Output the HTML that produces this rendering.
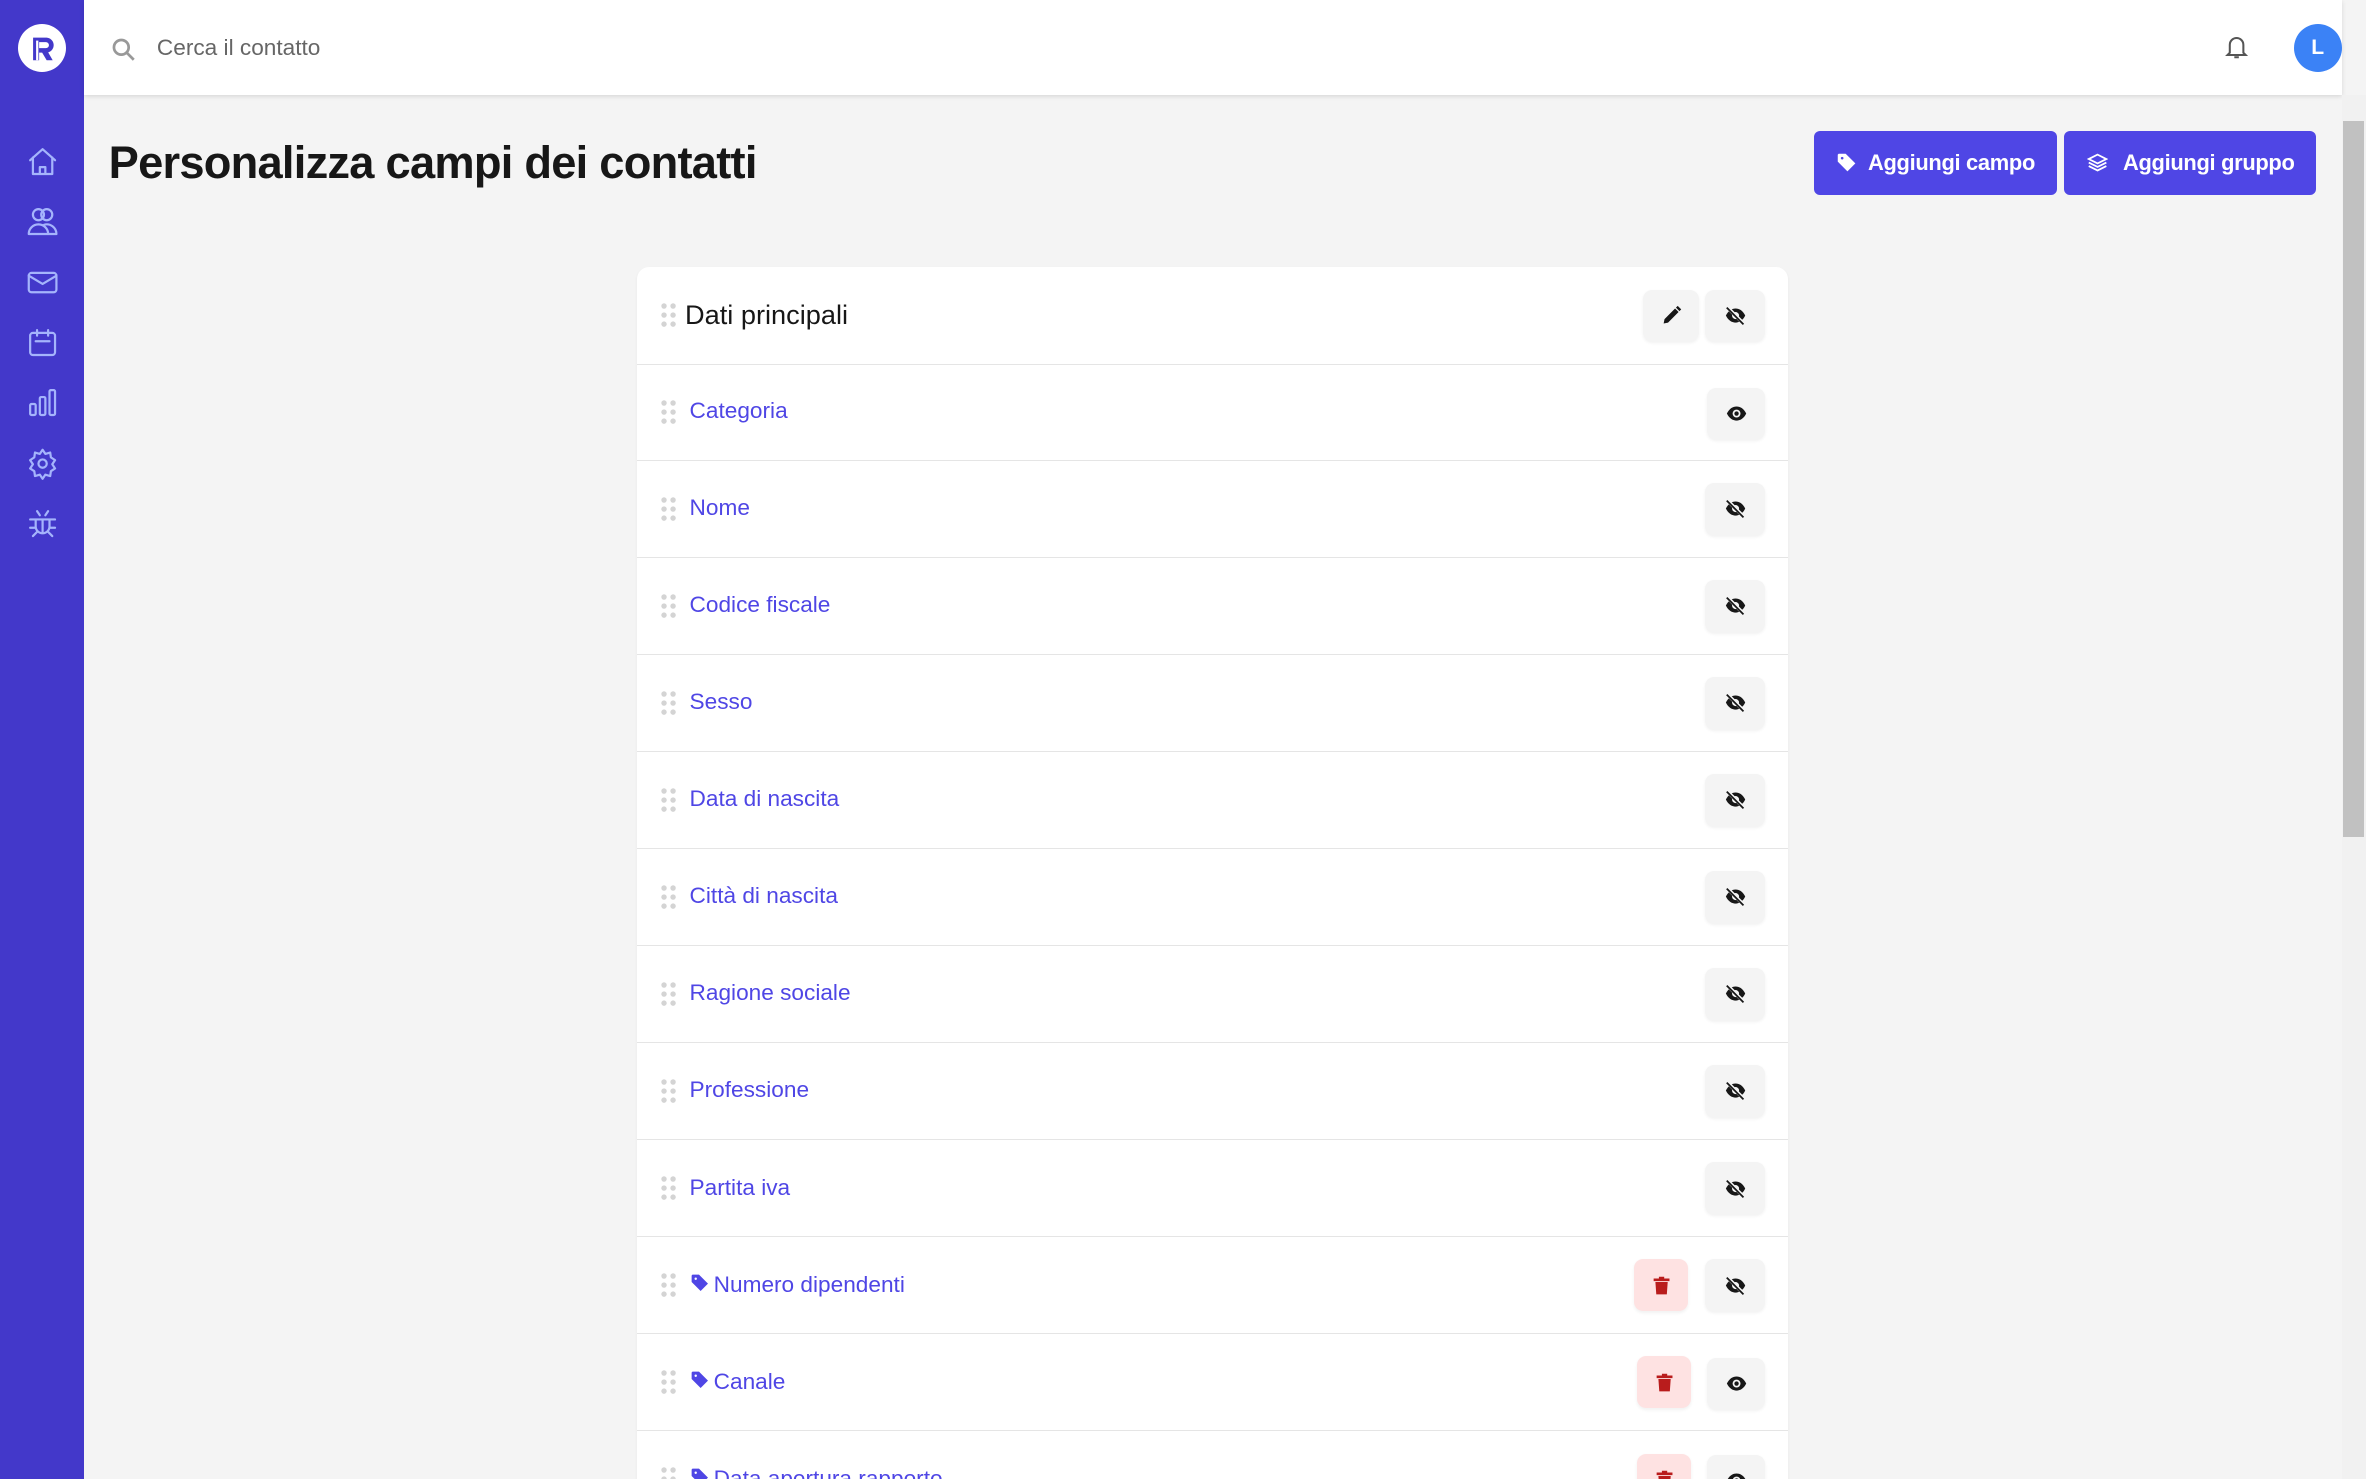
<!DOCTYPE html>
<html><head><meta charset="utf-8"><style>
html,body{margin:0;padding:0;overflow:hidden;width:2366px;height:1479px;}
#w{width:1568px;height:980px;overflow:hidden;zoom:1.5089;background:#f4f4f4;font-family:"Liberation Sans",sans-serif;position:relative;}
.side{position:absolute;left:0;top:0;width:56px;height:980px;background:#4338ca;}
.logo{position:absolute;left:12px;top:16px;width:32px;height:32px;border-radius:50%;background:#fff;}
.side svg.ic{position:absolute;left:17px;width:22px;height:22px;fill:none;stroke:#a5b4fc;stroke-width:1.6;stroke-linecap:round;stroke-linejoin:round;}
.top{position:absolute;left:56px;top:0;width:1496px;height:63px;background:#fff;box-shadow:0 1px 3px rgba(0,0,0,.12);}
.top .s{position:absolute;left:48px;top:23px;font-size:15px;color:#666;}
.av{position:absolute;left:1464px;top:16px;width:32px;height:32px;border-radius:50%;background:#3b82f6;color:#fff;font-size:14px;font-weight:bold;text-align:center;line-height:32px;}
h1{position:absolute;left:72px;top:91px;margin:0;font-size:30px;font-weight:bold;color:#171717;letter-spacing:-.5px;}
.btn{position:absolute;top:87px;height:42px;background:#4f46e5;color:#fff;border-radius:4px;font-weight:bold;font-size:14.5px;line-height:42px;box-sizing:border-box;padding-left:36px;white-space:nowrap;letter-spacing:-.2px;}
.btn svg{position:absolute;left:15px;top:14px;width:14px;height:14px;}
.card{position:absolute;left:422px;top:177px;width:763px;height:803px;overflow:hidden;background:#fff;border-radius:8px 8px 0 0;box-shadow:0 1px 2px rgba(0,0,0,.05);}
.row{position:absolute;left:0;width:763px;height:64px;border-bottom:1px solid #e5e5e5;}
.dots{position:absolute;left:16px;top:24px;width:10px;height:16px;}
.lbl{position:absolute;left:35px;top:23px;font-size:15px;color:#4f46e5;}
.b{position:absolute;top:15px;width:40px;height:34px;border-radius:6px;background:#f4f4f4;box-shadow:0 1px 2px rgba(0,0,0,.06);}
.b svg{position:absolute;left:13px;top:10px;width:14px;height:14px;}
.tr{background:#fee2e2;width:36px;}
.tr svg{left:11px;}
.sb{position:absolute;left:1552px;top:63px;width:16px;height:917px;background:#f1f1f1;}
.th{position:absolute;left:1553px;top:80px;width:14px;height:475px;background:#c1c1c1;}
</style></head><body><div id="w">
<div class="side">
<div class="logo"><svg width="32" height="32" viewBox="0 0 32 32"><path d="M10 9h9a5 5 0 0 1 1 9.8L23 24h-4l-3-5h-2v5h-4z" fill="#4338ca"/><path d="M14 12v4h4.5a2 2 0 0 0 0-4z" fill="#fff"/><rect x="12" y="11" width="1.5" height="13" fill="#fff"/></svg></div>
<svg class="ic" style="top:96px" viewBox="0 0 24 24"><path d="M3 11l9-8 9 8M5 9v12h14V9M10 21v-5h4v5"/></svg>
<svg class="ic" style="top:136px" viewBox="0 0 24 24"><circle cx="9" cy="7" r="4"/><circle cx="15" cy="7" r="4"/><path d="M2 21a7 7 0 0 1 14 0zM16 21h6a7 7 0 0 0-9-6.7"/></svg>
<svg class="ic" style="top:176px" viewBox="0 0 24 24"><rect x="2" y="5" width="20" height="14" rx="2"/><path d="M2 7l10 6 10-6"/></svg>
<svg class="ic" style="top:216px" viewBox="0 0 24 24"><rect x="3" y="5" width="18" height="16" rx="2"/><path d="M8 3v4M16 3v4M7 11h10"/></svg>
<svg class="ic" style="top:256px" viewBox="0 0 24 24"><rect x="3" y="13" width="4" height="8" rx="1"/><rect x="10" y="8" width="4" height="13" rx="1"/><rect x="17" y="3" width="4" height="18" rx="1"/></svg>
<svg class="ic" style="top:296px" viewBox="0 0 24 24"><circle cx="12" cy="12" r="3"/><path d="M12 2l2 3 3.5-1 .5 3.5 3 2-2 3 2 3-3 2-.5 3.5-3.5-1-2 3-2-3-3.5 1-.5-3.5-3-2 2-3-2-3 3-2 .5-3.5 3.5 1z"/></svg>
<svg class="ic" style="top:336px" viewBox="0 0 24 24"><path d="M8 3l2 3M16 3l-2 3M7 9h10v5a5 5 0 0 1-10 0zM3 9h4M17 9h4M3 15h4M17 15h4M5 21l3-3M19 21l-3-3M12 9v10"/></svg>
</div>
<div class="top">
<svg style="position:absolute;left:17px;top:24px" width="18" height="18" viewBox="0 0 24 24" fill="none" stroke="#999" stroke-width="2.4"><circle cx="10" cy="10" r="6.5"/><path d="M15 15l6 6"/></svg>
<div class="s">Cerca il contatto</div>
<svg style="position:absolute;left:1417px;top:21px" width="18" height="20" viewBox="0 0 24 24" fill="none" stroke="#555" stroke-width="1.8"><path d="M6 17V10a6 6 0 0 1 12 0v7l2 2H4zM10 21h4"/></svg>
<div class="av">L</div>
</div>
<h1>Personalizza campi dei contatti</h1>
<div class="btn" style="left:1202px;width:161px"><svg viewBox="0 0 24 24" fill="#fff"><path d="M2 3v8l11 11 9-9L11 2H3zm5 2.5a1.5 1.5 0 1 1 0 3 1.5 1.5 0 0 1 0-3z"/></svg>Aggiungi campo</div>
<div class="btn" style="left:1368px;width:167px;padding-left:39px"><svg viewBox="0 0 24 24" fill="none" stroke="#fff" stroke-width="2"><path d="M12 3l10 5-10 5-10-5zM2 12l10 5 10-5M2 16l10 5 10-5"/></svg>Aggiungi gruppo</div>

<svg width="0" height="0" style="position:absolute"><defs>
<g id="dt" fill="#d4d4d4"><circle cx="2" cy="2" r="1.8"/><circle cx="8" cy="2" r="1.8"/><circle cx="2" cy="8" r="1.8"/><circle cx="8" cy="8" r="1.8"/><circle cx="2" cy="14" r="1.8"/><circle cx="8" cy="14" r="1.8"/></g>
<g id="eye"><path d="M1 12C4 6 8 4 12 4s8 2 11 8c-3 6-7 8-11 8S4 18 1 12z" fill="#171717"/><circle cx="12" cy="12" r="4.5" fill="#f4f4f4"/><circle cx="12" cy="12" r="2.5" fill="#171717"/></g>
<g id="slash"><path d="M1 12C4 6 8 4 12 4s8 2 11 8c-3 6-7 8-11 8S4 18 1 12z" fill="#171717"/><circle cx="12" cy="12" r="4" fill="#f4f4f4"/><path d="M3 3l18 18" stroke="#f4f4f4" stroke-width="4"/><path d="M2 3l19 19" stroke="#171717" stroke-width="2"/></g>
<g id="trash" fill="#b91c1c"><path d="M3 4h18v3H3zM9 2h6v2H9zM5 8h14l-1 14H6z"/></g>
<g id="tag" fill="#4f46e5"><path d="M2 3v8l11 11 9-9L11 2H3zm5 2.5a1.5 1.5 0 1 1 0 3 1.5 1.5 0 0 1 0-3z"/></g>
</defs></svg>

<div class="card">
<div class="row" style="top:0"><svg class="dots" viewBox="0 0 10 16"><use href="#dt"/></svg><div class="lbl" style="left:32px;top:21px;font-size:18px;color:#171717">Dati principali</div>
<div class="b" style="left:667px;width:37px"><svg viewBox="0 0 24 24" style="left:12px"><path d="M3 21l1-5L16 4l4 4L8 20zM17 3l2-2 4 4-2 2z" fill="#171717"/></svg></div>
<div class="b" style="left:708px"><svg viewBox="0 0 24 24"><use href="#slash"/></svg></div></div>
</div>
<div class="sb"></div><div class="th"></div>
</div>
<script>
var rows=[["Categoria","eye",0],["Nome","slash",0],["Codice fiscale","slash",0],["Sesso","slash",0],["Data di nascita","slash",0],["Città di nascita","slash",0],["Ragione sociale","slash",0],["Professione","slash",0],["Partita iva","slash",0],["Numero dipendenti","slash",1],["Canale","eye",1],["Data apertura rapporto","eye",1]];
var c=document.querySelector('.card'),h='';
rows.forEach(function(r,i){var t=64+i*64.3;
h+='<div class="row" style="top:'+t+'px"><svg class="dots" viewBox="0 0 10 16"><use href="#dt"/></svg>';
h+='<div class="lbl">'+(r[2]?'<svg width="13" height="13" viewBox="0 0 24 24" style="vertical-align:-1px;margin-right:3px"><use href="#tag"/></svg>':'')+r[0]+'</div>';
if(r[2])h+='<div class="b tr" style="left:'+(r[1]=="eye"?663:661)+'px"><svg viewBox="0 0 24 24"><use href="#trash"/></svg></div>';
h+='<div class="b" style="left:'+(r[1]=="eye"?709:708)+'px;'+(r[1]=="eye"?'width:39px;top:16px':'')+'"><svg viewBox="0 0 24 24"><use href="#'+r[1]+'"/></svg></div></div>';});
c.insertAdjacentHTML('beforeend',h);
</script>
</body></html>
